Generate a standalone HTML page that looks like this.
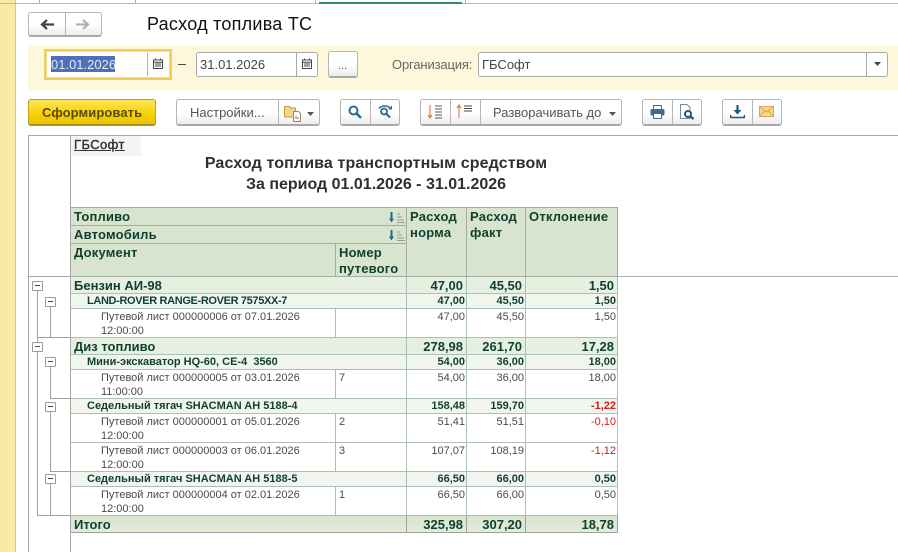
<!DOCTYPE html>
<html><head><meta charset="utf-8"><style>
html,body{margin:0;padding:0;background:#fff}
#p{position:relative;width:898px;height:552px;overflow:hidden;background:#fff;font-family:"Liberation Sans",sans-serif;color:#333}
#p div,#p span.a,#p svg{position:absolute}
.btn{box-sizing:border-box;border:1px solid #b5b5b5;border-bottom:2px solid #a8a8a8;border-radius:3px;background:linear-gradient(#fff,#fff 55%,#ececec)}
.sep{width:1px;background:#b5b5b5}
.f{box-sizing:border-box;border:1px solid #a8a8a8;border-radius:3px;background:#fff}
table{position:absolute;left:71px;top:207px;border-collapse:separate;border-spacing:0;table-layout:fixed;width:547px;font-size:12px;line-height:14px}
td{box-sizing:border-box;padding:0 3px;border-right:1px solid #a9bfb8;border-bottom:1px solid #a9bfb8;vertical-align:top;overflow:hidden;white-space:nowrap}
.h td{background:#d9e4cf;color:#0f3f2f;font-weight:bold;font-size:13px;line-height:16px;border-color:#a3aea0;padding-top:1px;white-space:normal;letter-spacing:.2px}
.h3 td{line-height:15.5px}
.g1 td{background:#e6f0e0;color:#0f3f2f;font-weight:bold;font-size:13px;line-height:14px;height:17px;padding-top:2px;padding-right:3px}
.g2 td{background:#f0f5ee;color:#0f3f2f;font-weight:bold;font-size:11px;line-height:13px;height:15px;padding-top:1px;padding-right:1px}
.d td{color:#4a4a4a;font-size:11px;line-height:14px;height:29px;padding-top:1px;padding-right:1px;border-bottom:0;background:#fff;box-shadow:inset 0 -1px #a9bfb8}
.d td:first-child{padding-left:30px}
.g2 td:first-child{padding-left:16px}
.i td{background:linear-gradient(#d7e4cd,#e2ecda);color:#0f3f2f;font-weight:bold;font-size:13px;line-height:14px;height:17px;padding-top:2px;padding-right:3px;border-color:#a0a0a0}
.r{text-align:right}.red{color:#d01c1c!important}
.bx{box-sizing:border-box;width:11px;height:10px;border:1px solid #9a9a9a;border-radius:1px;background:#fff}
.bx::after{content:"";position:absolute;left:2px;top:3px;width:5px;height:1px;background:#444}
.v{width:1px;background:#a0a0a0}.hl{height:1px;background:#a0a0a0}
</style></head><body><div id="p">
<!-- chrome -->
<div style="left:0;top:0;width:15px;height:552px;background:#f8eba4"></div>
<div style="left:15px;top:0;width:1px;height:552px;background:#d9c978"></div>
<div style="left:0;top:3px;width:898px;height:1px;background:#b8b8b8"></div>
<div style="left:39px;top:0;width:1px;height:3px;background:#aaa"></div>
<div style="left:135px;top:0;width:1px;height:3px;background:#aaa"></div>
<div style="left:315px;top:0;width:1px;height:3px;background:#aaa"></div>
<div style="left:319px;top:2px;width:143px;height:2px;background:#2f8f66"></div>
<div style="left:465px;top:0;width:1px;height:3px;background:#aaa"></div>
<!-- nav -->
<div class="btn" style="left:28px;top:12px;width:74px;height:25px"></div>
<div class="sep" style="left:65px;top:13px;height:22px"></div>
<svg style="left:40px;top:19px" width="15" height="11" viewBox="0 0 15 11"><path d="M14 5.500H3M7 1L2 5.500L7 10" fill="none" stroke="#444" stroke-width="2.200"/></svg>
<svg style="left:75px;top:19px" width="15" height="11" viewBox="0 0 15 11"><path d="M1 5.500H12M8 1L13 5.500L8 10" fill="none" stroke="#b0b0b0" stroke-width="2.200"/></svg>
<div style="left:147px;top:14px;font-size:18px;line-height:21px;color:#111;white-space:nowrap;letter-spacing:.25px">Расход топлива ТС</div>
<!-- band -->
<div style="left:28px;top:46px;width:870px;height:44px;background:#fdf8dc"></div>
<div style="left:44px;top:49px;width:128px;height:31px;box-sizing:border-box;border:2px solid #f0cf50;background:#fff"></div>
<div style="left:46px;top:51px;width:124px;height:27px;box-sizing:border-box;border:1px solid #e8dca0"></div>
<div style="left:51px;top:56px;width:64px;height:16px;background:#4f6fb8"></div>
<div class="sep" style="left:147px;top:53px;height:23px"></div>
<div style="left:51px;top:57px;font-size:13px;line-height:16px;color:#fff;opacity:.85">01.01.2026</div>
<svg style="left:153px;top:58px" width="10" height="11" viewBox="0 0 10 11"><path d="M.5 2h9v8.500h-9zM.5 4.200h9M2.500 .5v2M7.500 .5v2M2 6h6M2 8h6" fill="none" stroke="#444"/></svg>
<div style="left:178px;top:64px;width:8px;height:1px;background:#444"></div>
<div class="f" style="left:196px;top:52px;width:122px;height:25px"></div>
<div class="sep" style="left:296px;top:53px;height:23px;background:#a8a8a8"></div>
<div style="left:200px;top:57px;font-size:13px;line-height:16px;color:#444">31.01.2026</div>
<svg style="left:302px;top:58px" width="10" height="11" viewBox="0 0 10 11"><path d="M.5 2h9v8.500h-9zM.5 4.200h9M2.500 .5v2M7.500 .5v2M2 6h6M2 8h6" fill="none" stroke="#444"/></svg>
<div class="btn" style="left:328px;top:51px;width:30px;height:27px"></div>
<div style="left:338px;top:60px;font-size:11px;line-height:12px;color:#555">...</div>
<div style="left:392px;top:57px;font-size:13px;line-height:16px;color:#666;white-space:nowrap;letter-spacing:-.15px">Организация:</div>
<div class="f" style="left:478px;top:52px;width:410px;height:25px"></div>
<div class="sep" style="left:866px;top:53px;height:23px;background:#a8a8a8"></div>
<div style="left:482px;top:57px;font-size:13px;line-height:16px;color:#444">ГБСофт</div>
<svg style="left:874px;top:62px" width="7" height="4"><path d="M0 0h7L3.500 4z" fill="#444"/></svg>
<!-- toolbar -->
<div style="left:28px;top:99px;width:128px;height:27px;box-sizing:border-box;border:1px solid #b8a020;border-bottom:2px solid #a89220;border-radius:3px;background:linear-gradient(#ffe75a,#f5d000 60%,#ecc400)"></div>
<div style="left:42px;top:105px;font-size:13px;line-height:16px;font-weight:bold;color:#5a4a10;white-space:nowrap;letter-spacing:.1px">Сформировать</div>
<div class="btn" style="left:176px;top:99px;width:144px;height:27px"></div>
<div class="sep" style="left:278px;top:100px;height:24px"></div>
<div style="left:190px;top:105px;font-size:13px;line-height:16px;color:#555;white-space:nowrap">Настройки...</div>
<svg style="left:284px;top:104px" width="18" height="18" viewBox="0 0 18 18"><path d="M.5 2.500h5l1 1.500h5v9H.5z" fill="#f3d58a" stroke="#c79a45"/><path d="M9.500 7.500h5l2 2v8h-7z" fill="#fff" stroke="#888"/><path d="M12 15v-3M14 15v-2" stroke="#b5542c"/></svg>
<svg style="left:307px;top:112px" width="7" height="4"><path d="M0 0h7L3.500 4z" fill="#555"/></svg>
<div class="btn" style="left:340px;top:99px;width:60px;height:27px"></div>
<div class="sep" style="left:370px;top:100px;height:24px"></div>
<svg style="left:348px;top:105px" width="14" height="14" viewBox="0 0 14 14"><circle cx="5.500" cy="5.500" r="4" fill="none" stroke="#2b6a94" stroke-width="2"/><path d="M8.500 8.500L13 13" stroke="#2b6a94" stroke-width="2.400"/></svg>
<svg style="left:378px;top:104px" width="15" height="15" viewBox="0 0 15 15"><path d="M1 4.500C3 1.500 9 1 12 4" fill="none" stroke="#2b6a94" stroke-width="1.500"/><path d="M14 1.500v4h-4z" fill="#2b6a94"/><circle cx="6" cy="7.500" r="3" fill="none" stroke="#2b6a94" stroke-width="1.800"/><path d="M8.500 10L12 13.500" stroke="#2b6a94" stroke-width="2"/></svg>
<div class="btn" style="left:420px;top:99px;width:202px;height:27px"></div>
<div class="sep" style="left:450px;top:100px;height:24px"></div>
<div class="sep" style="left:480px;top:100px;height:24px"></div>
<svg style="left:427px;top:104px" width="16" height="16" viewBox="0 0 16 16"><path d="M3 1v13M1 11l2 3 2-3" fill="none" stroke="#d98050" stroke-width="1.200"/><path d="M8 2h7M8 5h7M8 8h7M8 11h7M8 14h7" stroke="#555"/></svg>
<svg style="left:456px;top:104px" width="17" height="15" viewBox="0 0 17 15"><path d="M3 14V1M1 4l2-3 2 3" fill="none" stroke="#d98050" stroke-width="1.200"/><path d="M8 2h8M8 4.500h8M8 7h8" stroke="#444"/></svg>
<div style="left:493px;top:105px;font-size:13px;line-height:16px;color:#555;white-space:nowrap">Разворачивать до</div>
<svg style="left:609px;top:112px" width="7" height="4"><path d="M0 0h7L3.500 4z" fill="#555"/></svg>
<div class="btn" style="left:642px;top:99px;width:60px;height:27px"></div>
<div class="sep" style="left:672px;top:100px;height:24px"></div>
<svg style="left:650px;top:105px" width="15" height="14" viewBox="0 0 15 14"><path d="M3.500 4V.5h8V4" fill="#fff" stroke="#3d6c92"/><rect x=".5" y="4" width="14" height="6.500" rx="1.500" fill="#3d6c92"/><path d="M3.500 8.500h8v5h-8z" fill="#fff" stroke="#3d6c92"/></svg>
<svg style="left:680px;top:104px" width="15" height="16" viewBox="0 0 15 16"><path d="M.5.500h6.500l3 3v11H.5z" fill="#fff" stroke="#7a8a98"/><circle cx="8" cy="10" r="3" fill="#fff" stroke="#1d5a80" stroke-width="2"/><path d="M10 12l3.500 3" stroke="#1d5a80" stroke-width="2.200"/></svg>
<div class="btn" style="left:722px;top:99px;width:60px;height:27px"></div>
<div class="sep" style="left:752px;top:100px;height:24px"></div>
<svg style="left:730px;top:105px" width="15" height="14" viewBox="0 0 15 14"><path d="M7.500 0v6" stroke="#1d5a80" stroke-width="2.200"/><path d="M3.500 5h8l-4 4.500z" fill="#1d5a80"/><path d="M.5 10v2.500h14V10" fill="none" stroke="#1d5a80" stroke-width="1.600"/></svg>
<svg style="left:759px;top:106px" width="15" height="11" viewBox="0 0 15 11"><rect x=".5" y=".5" width="14" height="10" fill="#f5d590" stroke="#d9a850"/><path d="M.5.500L7.500 6l7-5.500M.5 10.500L5.500 5M14.500 10.500L9.500 5" fill="none" stroke="#d9a850"/></svg>
<!-- report frame -->
<div style="left:28px;top:135px;width:870px;height:1px;background:#a8a8a8"></div>
<div style="left:28px;top:135px;width:1px;height:417px;background:#a8a8a8"></div>
<div style="left:70px;top:135px;width:1px;height:417px;background:#a8a8a8"></div>
<div style="left:28px;top:276px;width:43px;height:1px;background:#a8a8a8"></div>
<div style="left:617px;top:276px;width:281px;height:1px;background:#b0b0b0"></div>
<div style="left:71px;top:136px;width:70px;height:20px;background:#f4f4f4"></div>
<div style="left:74px;top:137px;font-size:13px;line-height:15px;color:#333;text-decoration:underline;-webkit-text-stroke:.4px #333;letter-spacing:.4px">ГБСофт</div>
<div style="left:71px;top:155px;width:610px;text-align:center;font-size:16px;line-height:18px;font-weight:bold;color:#2f2f2f;letter-spacing:.13px">Расход топлива транспортным средством</div>
<div style="left:71px;top:176px;width:610px;text-align:center;font-size:16px;line-height:18px;font-weight:bold;color:#2f2f2f">За период 01.01.2026 - 31.01.2026</div>
<table>
<colgroup><col style="width:265px"><col style="width:71px"><col style="width:60px"><col style="width:59px"><col style="width:92px"></colgroup>
<tr class="h"><td colspan="2" style="height:18px;border-top:1px solid #a3aea0">Топливо</td><td rowspan="3" style="border-top:1px solid #a3aea0">Расход норма</td><td rowspan="3" style="border-top:1px solid #a3aea0">Расход факт</td><td rowspan="3" style="border-top:1px solid #a3aea0">Отклонение</td></tr>
<tr class="h"><td colspan="2" style="height:18px">Автомобиль</td></tr>
<tr class="h h3"><td style="height:33px">Документ</td><td>Номер путевого</td></tr>
<tr class="g1"><td colspan="2">Бензин АИ-98</td><td class="r">47,00</td><td class="r">45,50</td><td class="r">1,50</td></tr>
<tr class="g2"><td colspan="2" style="letter-spacing:-.35px">LAND-ROVER RANGE-ROVER 7575XX-7</td><td class="r">47,00</td><td class="r">45,50</td><td class="r">1,50</td></tr>
<tr class="d"><td>Путевой лист 000000006 от 07.01.2026<br>12:00:00</td><td></td><td class="r">47,00</td><td class="r">45,50</td><td class="r">1,50</td></tr>
<tr class="g1"><td colspan="2">Диз топливо</td><td class="r">278,98</td><td class="r">261,70</td><td class="r">17,28</td></tr>
<tr class="g2"><td colspan="2">Мини-экскаватор HQ-60, CE-4&nbsp; 3560</td><td class="r">54,00</td><td class="r">36,00</td><td class="r">18,00</td></tr>
<tr class="d"><td>Путевой лист 000000005 от 03.01.2026<br>11:00:00</td><td>7</td><td class="r">54,00</td><td class="r">36,00</td><td class="r">18,00</td></tr>
<tr class="g2"><td colspan="2">Седельный тягач SHACMAN AH 5188-4</td><td class="r">158,48</td><td class="r">159,70</td><td class="r red">-1,22</td></tr>
<tr class="d"><td>Путевой лист 000000001 от 05.01.2026<br>12:00:00</td><td>2</td><td class="r">51,41</td><td class="r">51,51</td><td class="r red">-0,10</td></tr>
<tr class="d"><td>Путевой лист 000000003 от 06.01.2026<br>12:00:00</td><td>3</td><td class="r">107,07</td><td class="r">108,19</td><td class="r red">-1,12</td></tr>
<tr class="g2"><td colspan="2">Седельный тягач SHACMAN AH 5188-5</td><td class="r">66,50</td><td class="r">66,00</td><td class="r">0,50</td></tr>
<tr class="d"><td>Путевой лист 000000004 от 02.01.2026<br>12:00:00</td><td>1</td><td class="r">66,50</td><td class="r">66,00</td><td class="r">0,50</td></tr>
<tr class="i"><td colspan="2">Итого</td><td class="r">325,98</td><td class="r">307,20</td><td class="r">18,78</td></tr>
</table>
<!-- header sort icons -->
<svg style="left:389px;top:212px" width="17" height="11" viewBox="0 0 17 11"><path d="M2.500 0v8" stroke="#1d6a90" stroke-width="2"/><path d="M0 6.500h5L2.500 10.500z" fill="#1d6a90"/><path d="M8 2h3M8 5h5M8 8h7M8 10.500h8" stroke="#9a9a9a"/></svg>
<svg style="left:389px;top:230px" width="17" height="11" viewBox="0 0 17 11"><path d="M2.500 0v8" stroke="#1d6a90" stroke-width="2"/><path d="M0 6.500h5L2.500 10.500z" fill="#1d6a90"/><path d="M8 2h3M8 5h5M8 8h7M8 10.500h8" stroke="#9a9a9a"/></svg>
<!-- tree -->
<div class="v" style="left:37px;top:290px;height:226px"></div>
<div class="hl" style="left:37px;top:337px;width:33px"></div>
<div class="hl" style="left:37px;top:515px;width:33px"></div>
<div class="v" style="left:50px;top:307px;height:30px"></div>
<div class="v" style="left:50px;top:367px;height:31px"></div>
<div class="hl" style="left:50px;top:398px;width:20px"></div>
<div class="v" style="left:50px;top:411px;height:60px"></div>
<div class="hl" style="left:50px;top:471px;width:20px"></div>
<div class="v" style="left:50px;top:484px;height:31px"></div>
<div class="bx" style="left:32px;top:281px"></div>
<div class="bx" style="left:45px;top:297px"></div>
<div class="bx" style="left:32px;top:342px"></div>
<div class="bx" style="left:45px;top:357px"></div>
<div class="bx" style="left:45px;top:402px"></div>
<div class="bx" style="left:45px;top:474px"></div>
</div></body></html>
